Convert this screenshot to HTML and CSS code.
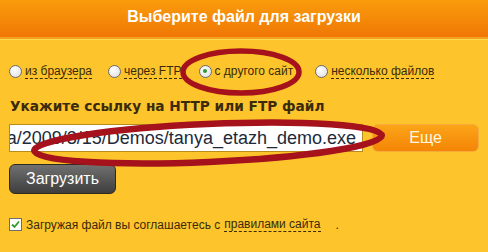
FILE: index.html
```html
<!DOCTYPE html>
<html lang="ru">
<head>
  <meta charset="UTF-8">
  <title>Выберите файл для загрузки</title>
  <link rel="stylesheet" href="styles.css">
</head>
<body>
  <div class="panel">
    <div class="panel-head">Выберите файл для загрузки</div>

    <div class="panel-body">
      <!-- источник файла -->
      <div class="sources">
        <label class="src"><span class="radio"></span><span class="dash">из браузера</span></label>
        <label class="src"><span class="radio"></span><span class="dash">через FTP</span></label>
        <label class="src src-on"><span class="radio on"></span><span>с другого сайт</span></label>
        <label class="src"><span class="radio"></span><span class="dash">несколько файлов</span></label>
      </div>

      <h3 class="url-title">Укажите ссылку на HTTP или FTP файл</h3>

      <div class="url-row">
        <div class="url-input"><span>a/2009/3/15/Demos/tanya_etazh_demo.exe</span></div>
        <button class="btn-more">Еще</button>
      </div>

      <button class="btn-upload">Загрузить</button>

      <label class="agree">
        <span class="check">
          <svg width="9" height="9" viewBox="0 0 9 9"><path d="M1 4.5 L3.5 7 L8 1.5" fill="none" stroke="#2f9a2f" stroke-width="1.8"/></svg>
        </span>
        Загружая файл вы соглашаетесь с <span class="dash">правилами сайта</span><span class="dot">.</span>
      </label>
    </div>

    <!-- пометки поверх скриншота -->
    <svg class="marks" width="488" height="252" viewBox="0 0 488 252">
      <ellipse cx="241" cy="72" rx="58" ry="21" fill="none" stroke="#a5121b" stroke-width="5.5"/>
      <ellipse cx="208" cy="143" rx="174" ry="19" fill="none" stroke="#a5121b" stroke-width="6.5" transform="rotate(-2.5 208 143)"/>
    </svg>
  </div>
</body>
</html>
```

FILE: styles.css
```css
body {
  margin: 0;
  font-family: Tahoma, "DejaVu Sans", sans-serif;
  background: #fdc52b;
}
.panel {
  position: relative;
  width: 488px;
  height: 252px;
  background: #fdc52b;
  overflow: hidden;
}
.panel-head {
  height: 37px;
  line-height: 33px;
  text-align: center;
  color: #fff;
  font-family: "Liberation Sans", Arial, sans-serif;
  font-weight: bold;
  font-size: 16px;
  background: linear-gradient(#fa9c0c, #f07705);
  border-bottom: 2px solid #f2a21c;
  box-shadow: 0 1px 0 #fedb4e;
}
.panel-body {
  padding: 0 9px;
}
.sources {
  display: flex;
  align-items: center;
  margin-top: 22px;
  height: 20px;
  font-family: "Liberation Sans", Arial, sans-serif;
  font-size: 12px;
  color: #3a2a0a;
}
.src {
  display: flex;
  align-items: center;
  margin-right: 16px;
}
.src-on {
  margin-left: 1px;
  margin-right: 22px;
}
.radio {
  width: 11px;
  height: 11px;
  border: 1px solid #6b6b6b;
  border-radius: 50%;
  background: radial-gradient(circle at 40% 35%, #fff, #dcdcdc);
  margin-right: 3px;
  position: relative;
}
.radio.on::after {
  content: "";
  position: absolute;
  left: 3.5px;
  top: 3.5px;
  width: 4px;
  height: 4px;
  border-radius: 50%;
  background: #2f9a2f;
}
.dash {
  border-bottom: 1px dashed #3a2a0a;
  line-height: 14px;
}
.url-title {
  margin: 17px 0 0 1px;
  font-family: "DejaVu Sans", Verdana, sans-serif;
  font-weight: bold;
  font-size: 13.7px;
  color: #3b2a0c;
  height: 20px;
}
.url-row {
  display: flex;
  margin-top: 6px;
}
.url-input {
  box-sizing: border-box;
  flex: none;
  width: 354px;
  height: 28px;
  border: 1px solid #b98b1a;
  background: #fff;
  overflow: hidden;
  display: flex;
  justify-content: flex-end;
  align-items: center;
  white-space: nowrap;
  font-family: "Liberation Sans", Arial, sans-serif;
  font-size: 18px;
  color: #1c2a3a;
  padding-right: 6px;
}
.btn-more {
  box-sizing: border-box;
  flex: none;
  margin-left: 9px;
  width: 107px;
  height: 28px;
  border: 1px solid #f6ac3c;
  border-radius: 6px;
  background: linear-gradient(#fca418, #f48506);
  color: #fff8e0;
  font-family: "Liberation Sans", Arial, sans-serif;
  font-size: 16px;
}
.btn-upload {
  display: block;
  margin-top: 12px;
  width: 107px;
  height: 30px;
  border: 1px solid #2e2a20;
  border-radius: 6px;
  background: linear-gradient(#707070, #3e3e3e);
  color: #fff;
  font-family: "Liberation Sans", Arial, sans-serif;
  font-size: 16px;
}
.agree {
  display: flex;
  align-items: center;
  margin-top: 23px;
  font-family: "Liberation Sans", Arial, sans-serif;
  font-size: 12px;
  color: #3a2a0a;
}
.check {
  width: 11px;
  height: 11px;
  border: 1px solid #6e6e6e;
  background: #fff;
  margin-right: 4px;
  display: flex;
  align-items: center;
  justify-content: center;
}
.agree .dash {
  margin-left: 4px;
}
.dot {
  margin-left: 15px;
}
.marks {
  position: absolute;
  left: 0;
  top: 0;
  pointer-events: none;
}
```
